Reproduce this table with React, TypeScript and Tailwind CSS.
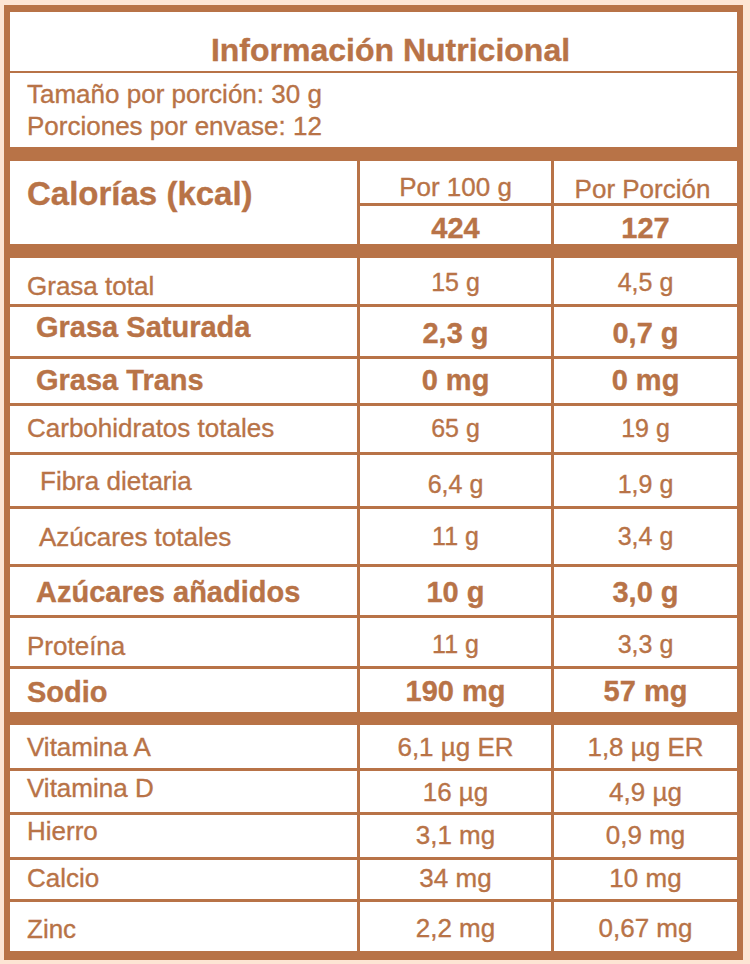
import React from "react";

type Row = {
  label: string;
  v1: string;
  v2: string;
  bold?: boolean;
  indent: string;
  h: string;
  lpt: string;
  vpt: string;
};

const main: Row[] = [
  { label: "Grasa total", v1: "15 g", v2: "4,5 g", indent: "pl-[17px]", h: "h-[46px]", lpt: "pt-[15px]", vpt: "pt-[12px]" },
  { label: "Grasa Saturada", v1: "2,3 g", v2: "0,7 g", bold: true, indent: "pl-[26px]", h: "h-[49px]", lpt: "pt-[6px]", vpt: "pt-[12px]" },
  { label: "Grasa Trans", v1: "0 mg", v2: "0 mg", bold: true, indent: "pl-[26px]", h: "h-[44px]", lpt: "pt-[7px]", vpt: "pt-[7px]" },
  { label: "Carbohidratos totales", v1: "65 g", v2: "19 g", indent: "pl-[17px]", h: "h-[46px]", lpt: "pt-[9px]", vpt: "pt-[10px]" },
  { label: "Fibra dietaria", v1: "6,4 g", v2: "1,9 g", indent: "pl-[30px]", h: "h-[51px]", lpt: "pt-[13px]", vpt: "pt-[17px]" },
  { label: "Azúcares totales", v1: "11 g", v2: "3,4 g", indent: "pl-[29px]", h: "h-[55px]", lpt: "pt-[15px]", vpt: "pt-[15px]" },
  { label: "Azúcares añadidos", v1: "10 g", v2: "3,0 g", bold: true, indent: "pl-[26px]", h: "h-[48px]", lpt: "pt-[11px]", vpt: "pt-[11px]" },
  { label: "Proteína", v1: "11 g", v2: "3,3 g", indent: "pl-[17px]", h: "h-[48px]", lpt: "pt-[15px]", vpt: "pt-[14px]" },
  { label: "Sodio", v1: "190 mg", v2: "57 mg", bold: true, indent: "pl-[17px]", h: "h-[43px]", lpt: "pt-[9px]", vpt: "pt-[8px]" },
];

const vit: Row[] = [
  { label: "Vitamina A", v1: "6,1 µg ER", v2: "1,8 µg ER", indent: "pl-[17px]", h: "h-[43px]", lpt: "pt-[9px]", vpt: "pt-[9px]" },
  { label: "Vitamina D", v1: "16 µg", v2: "4,9 µg", indent: "pl-[17px]", h: "h-[41px]", lpt: "pt-[4px]", vpt: "pt-[8px]" },
  { label: "Hierro", v1: "3,1 mg", v2: "0,9 mg", indent: "pl-[17px]", h: "h-[42px]", lpt: "pt-[3px]", vpt: "pt-[7px]" },
  { label: "Calcio", v1: "34 mg", v2: "10 mg", indent: "pl-[17px]", h: "h-[39px]", lpt: "pt-[5px]", vpt: "pt-[5px]" },
  { label: "Zinc", v1: "2,2 mg", v2: "0,67 mg", indent: "pl-[17px]", h: "h-[49px]", lpt: "pt-[14px]", vpt: "pt-[13px]" },
];

function Line({ thick }: { thick?: string }) {
  return <div className={`${thick ?? "h-[3px]"} w-full bg-[#b87347]`} />;
}

function DataRow({ r, vit }: { r: Row; vit?: boolean }) {
  const lf = r.bold ? "text-[29px] font-bold" : "text-[26px]";
  const vf = r.bold ? "text-[29px] font-bold" : vit ? "text-[26px]" : "text-[25px]";
  return (
    <div className={`flex ${r.h}`}>
      <div className={`w-[347px] shrink-0 leading-none whitespace-nowrap ${r.indent} ${r.lpt} ${lf}`}>{r.label}</div>
      <div className={`w-[194px] shrink-0 border-l-[3px] border-[#b87347] text-center leading-none whitespace-nowrap ${r.vpt} ${vf}`}>{r.v1}</div>
      <div className={`w-[186px] shrink-0 border-l-[3px] border-[#b87347] text-center leading-none whitespace-nowrap ${r.vpt} ${vf}`}>{r.v2}</div>
    </div>
  );
}

export default function App() {
  return (
    <div className="w-[750px] h-[964px] bg-[#fde5d4] pl-[4px] pt-[5px] font-['Liberation_Sans',Arial,sans-serif] text-[#b87347] [-webkit-text-stroke:0.35px_#b87347]">
      <div className="w-[739px] bg-white border-l-[6px] border-t-[7px] border-r-[6px] border-b-[9px] border-[#b87347]">
        <div className="h-[59px] pt-[22px] pl-[34px] text-center text-[32px] font-bold leading-none">Información Nutricional</div>
        <Line thick="h-[2px]" />
        <div className="h-[74px] pt-[5px] pl-[17px] text-[26px] leading-[32px]">
          <div>Tamaño por porción: 30 g</div>
          <div>Porciones por envase: 12</div>
        </div>
        <Line thick="h-[14px]" />
        <div className="flex h-[83px]">
          <div className="w-[347px] shrink-0 pl-[17px] pt-[16px] text-[33px] font-bold leading-none">Calorías (kcal)</div>
          <div className="w-[194px] shrink-0 border-l-[3px] border-[#b87347] flex flex-col">
            <div className="h-[42px] pt-[13px] text-center text-[26px] leading-none">Por 100 g</div>
            <Line />
            <div className="h-[38px] pt-[8px] text-center text-[29px] font-bold leading-none">424</div>
          </div>
          <div className="w-[186px] shrink-0 border-l-[3px] border-[#b87347] flex flex-col">
            <div className="h-[42px] pt-[15px] text-center text-[26px] leading-none pr-[6px]">Por Porción</div>
            <Line />
            <div className="h-[38px] pt-[8px] text-center text-[29px] font-bold leading-none">127</div>
          </div>
        </div>
        <Line thick="h-[14px]" />
        {main.map((r, i) => (
          <React.Fragment key={r.label}>
            {i > 0 && <Line />}
            <DataRow r={r} />
          </React.Fragment>
        ))}
        <Line thick="h-[13px]" />
        {vit.map((r, i) => (
          <React.Fragment key={r.label}>
            {i > 0 && <Line />}
            <DataRow r={r} vit />
          </React.Fragment>
        ))}
      </div>
    </div>
  );
}
